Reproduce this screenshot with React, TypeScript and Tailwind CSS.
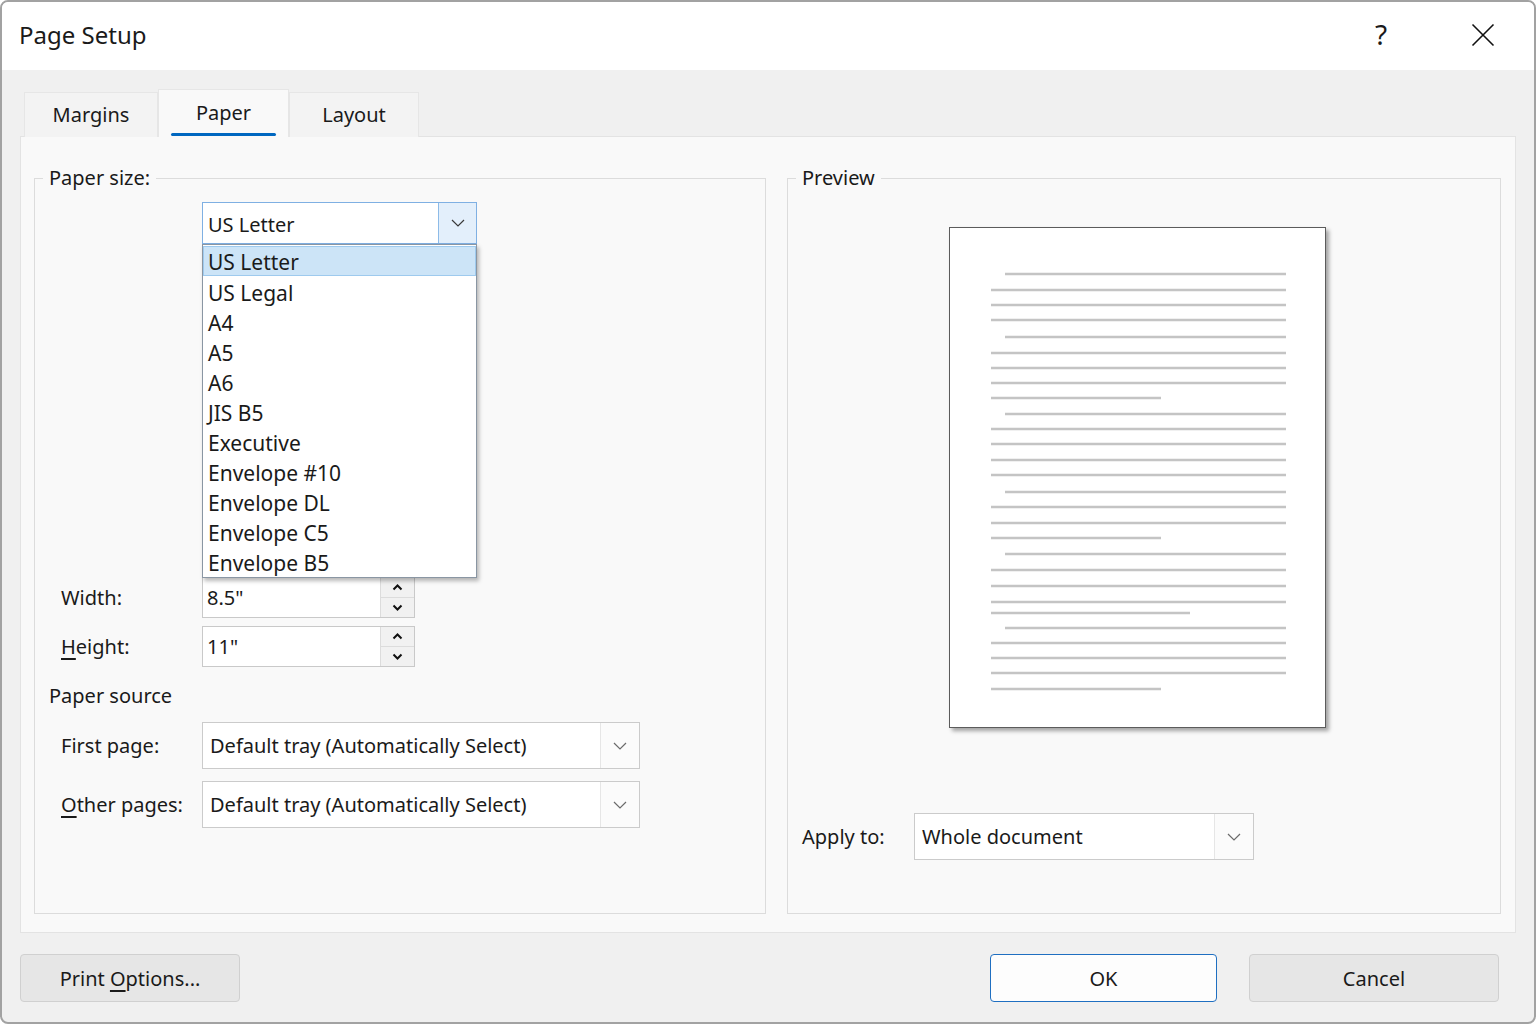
import React from 'react';

const paperSizes = [
  'US Letter',
  'US Legal',
  'A4',
  'A5',
  'A6',
  'JIS B5',
  'Executive',
  'Envelope #10',
  'Envelope DL',
  'Envelope C5',
  'Envelope B5',
];

// preview text lines: [y, kind]  i = indented, f = full, s = short
const previewLines: [number, string][] = [
  [46, 'i'], [62, 'f'], [77, 'f'], [92, 'f'], [109, 'i'], [125, 'f'], [140, 'f'], [155, 'f'],
  [170, 's'], [186, 'i'], [201, 'f'], [216, 'f'], [232, 'f'], [247, 'f'], [264, 'i'], [279, 'f'],
  [295, 'f'], [310, 's'], [326, 'i'], [342, 'f'], [358, 'f'], [374, 'f'], [385, 'm'], [400, 'i'],
  [415, 'f'], [430, 'f'], [445, 'f'], [461, 's'],
];

const Chevron = ({ color = '#6b6b6b' }: { color?: string }) => (
  <svg width="14" height="8" viewBox="0 0 14 8">
    <path d="M1 1l6 6 6-6" fill="none" stroke={color} strokeWidth="1.2" />
  </svg>
);

const SpinArrow = ({ up }: { up?: boolean }) => (
  <svg width="11" height="7" viewBox="0 0 11 7">
    <path
      d={up ? 'M1.5 5.5L5.5 1.5l4 4' : 'M1.5 1.5l4 4 4-4'}
      fill="none"
      stroke="#111"
      strokeWidth="2"
    />
  </svg>
);

const Spinner = ({ value }: { value: string }) => (
  <div className="flex w-[213px] h-[41px] border border-[#c9c9c9] bg-white">
    <div className="flex-1 flex items-center pl-[4px] pt-[1px] text-[20px]">{value}</div>
    <div className="w-[34px] flex flex-col border-l border-[#dcdcdc] bg-[#f1f1f1]">
      <div className="flex-1 flex items-center justify-center border-b border-[#dcdcdc]">
        <SpinArrow up />
      </div>
      <div className="flex-1 flex items-center justify-center">
        <SpinArrow />
      </div>
    </div>
  </div>
);

const Combo = ({ value, className }: { value: string; className: string }) => (
  <div className={`flex border border-[#cbcbcb] bg-white ${className}`}>
    <div className="flex-1 flex items-center pl-[7px] pt-[1px] text-[20px]">{value}</div>
    <div className="w-[39px] flex items-center justify-center border-l border-[#e6e6e6] bg-[#fbfbfb]">
      <Chevron />
    </div>
  </div>
);

const PageSetup: React.FC = () => {
  return (
    <div className="w-[1536px] h-[1024px] bg-white">
      <div className="w-full h-full flex flex-col bg-[#f0f0f0] border-2 border-[#a2a2a2] rounded-[8px] overflow-hidden text-[#1a1a1a] font-['Noto_Sans',sans-serif]">
        {/* title bar */}
        <div className="h-[68px] shrink-0 bg-white flex items-center pl-[17px]">
          <span className="text-[24px] leading-none -mt-[2px]">Page Setup</span>
          <div className="ml-auto flex items-center">
            <span className="text-[28px] leading-none w-[40px] mr-[52px] text-center -mt-[4px]">?</span>
            <div className="w-[60px] flex justify-center mr-[21px] -mt-[3px]">
              <svg width="24" height="24" viewBox="0 0 24 24">
                <path d="M1.5 1.5l21 21M22.5 1.5l-21 21" stroke="#111" strokeWidth="1.6" />
              </svg>
            </div>
          </div>
        </div>

        <div className="flex-1 flex flex-col px-[18px]">
          {/* tabs */}
          <div className="flex items-end pt-[19px] ml-[4px] -mb-px relative z-10 text-[20px]">
            <div className="w-[134px] h-[45px] flex items-center justify-center bg-[#f3f3f3] border border-b-0 border-[#e6e6e6]">
              Margins
            </div>
            <div className="relative w-[131px] h-[48px] flex items-center justify-center bg-[#f9f9f9] border-t border-x border-[#e6e6e6] pb-[1px]">
              Paper
              <div className="absolute left-[12px] right-[12px] bottom-[1px] h-[3px] rounded-full bg-[#0067c0]" />
            </div>
            <div className="w-[130px] h-[45px] flex items-center justify-center bg-[#f3f3f3] border border-b-0 border-[#e6e6e6]">
              Layout
            </div>
          </div>

          {/* tab panel */}
          <div className="flex-1 flex gap-[21px] bg-[#f9f9f9] border border-[#e3e3e3] pl-[13px] pr-[14px] pt-[26px] pb-[18px] text-[20px]">
            {/* paper size group */}
            <fieldset className="w-[732px] border border-[#dcdcdc]">
              <legend className="ml-[8px] px-[6px] leading-[30px]">Paper size:</legend>
              <div className="flex flex-col">
                <div className="relative ml-[167px] mt-[9px] w-[275px]">
                  <div className="flex h-[42px] border border-[#7fb0e3] bg-white">
                    <div className="flex-1 flex items-center pl-[5px] pt-[3px]">US Letter</div>
                    <div className="w-[38px] flex items-center justify-center border-l border-[#8dbbe8] bg-[#e3effb]">
                      <Chevron color="#3a3a3a" />
                    </div>
                  </div>
                  <div className="absolute left-0 top-[42px] w-[275px] bg-white border border-[#8a96a3] shadow-[2px_3px_4px_rgba(0,0,0,0.28)] z-20 pt-[1px] pb-[1px]">
                    {paperSizes.map((s, i) => (
                      <div
                        key={s}
                        className={
                          i === 0
                            ? 'h-[30px] flex items-center pl-[4px] pt-[4px] text-[21px] bg-[#cce4f7] border border-[#9ecaee]'
                            : 'h-[30px] flex items-center pl-[5px] pt-[5px] text-[21px]'
                        }
                      >
                        {s}
                      </div>
                    ))}
                  </div>
                </div>

                <div className="mt-[333px] flex items-center pl-[26px]">
                  <span className="w-[141px] pt-[1px]">Width:</span>
                  <Spinner value={'8.5"'} />
                </div>
                <div className="mt-[8px] flex items-center pl-[26px]">
                  <span className="w-[141px] pt-[1px]">
                    <span className="underline underline-offset-[4px]">H</span>eight:
                  </span>
                  <Spinner value={'11"'} />
                </div>

                <div className="mt-[14px] pl-[14px] leading-[28px] pt-[1px]">Paper source</div>

                <div className="mt-[12px] flex items-center pl-[26px]">
                  <span className="w-[141px]">First page:</span>
                  <Combo value="Default tray (Automatically Select)" className="w-[438px] h-[47px]" />
                </div>
                <div className="mt-[12px] flex items-center pl-[26px]">
                  <span className="w-[141px]">
                    <span className="underline underline-offset-[4px]">O</span>ther pages:
                  </span>
                  <Combo value="Default tray (Automatically Select)" className="w-[438px] h-[47px]" />
                </div>
              </div>
            </fieldset>

            {/* preview group */}
            <fieldset className="flex-1 border border-[#dcdcdc]">
              <legend className="ml-[8px] px-[6px] leading-[30px]">Preview</legend>
              <div className="flex flex-col">
                <div className="ml-[161px] mt-[34px] w-[377px] h-[501px] bg-white border border-[#5c5c5c] shadow-[3px_3px_4px_rgba(0,0,0,0.35)]">
                  <svg width="375" height="499" viewBox="0 0 375 499">
                    {previewLines.map(([y, k], i) => (
                      <line
                        key={i}
                        x1={k === 'i' ? 55 : 41}
                        x2={k === 's' ? 211 : k === 'm' ? 240 : 336}
                        y1={y}
                        y2={y}
                        stroke="#c4c4c4"
                        strokeWidth="2.6"
                      />
                    ))}
                  </svg>
                </div>
                <div className="mt-[85px] flex items-center pl-[14px]">
                  <span className="w-[112px] pt-[1px]">Apply to:</span>
                  <Combo value="Whole document" className="w-[340px] h-[47px]" />
                </div>
              </div>
            </fieldset>
          </div>

          {/* buttons */}
          <div className="flex items-center pt-[21px] pb-[20px] text-[20px]">
            <button className="w-[220px] h-[48px] pt-[1px] bg-[#e6e6e6] border border-[#d0d0d0] rounded-[4px]">
              Print <span className="underline underline-offset-[4px]">O</span>ptions...
            </button>
            <button className="ml-auto w-[227px] h-[48px] pt-[1px] bg-[#fdfdfd] border-[1.5px] border-[#1f6fc1] rounded-[4px]">
              OK
            </button>
            <button className="ml-[32px] mr-[17px] w-[250px] h-[48px] pt-[1px] bg-[#e6e6e6] border border-[#d0d0d0] rounded-[4px]">
              Cancel
            </button>
          </div>
        </div>
      </div>
    </div>
  );
};

export default PageSetup;
